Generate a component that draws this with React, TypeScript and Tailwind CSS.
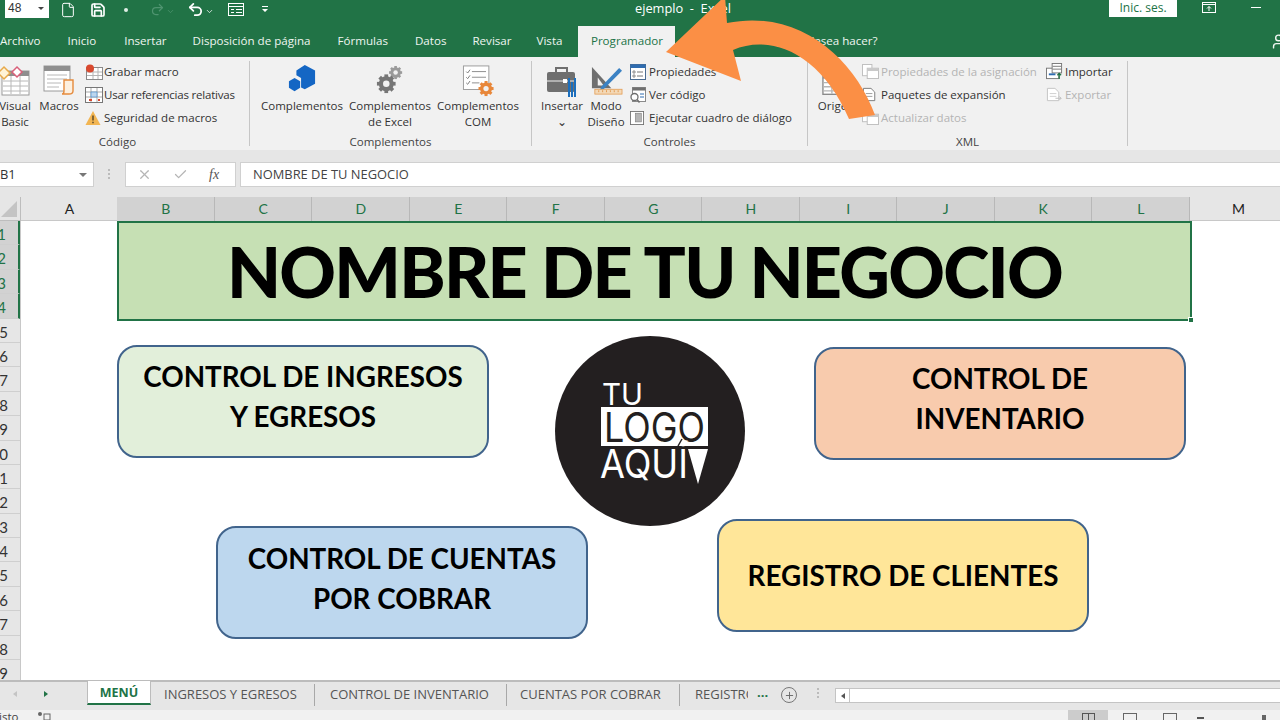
import React from 'react';
import { File, Save, Undo2, Redo2, Check, X, User, Plus, ChevronDown } from 'lucide-react';

const green = '#217346';

const tabs = [
  { label: 'Archivo', cls: 'ml-0' },
  { label: 'Inicio', cls: 'ml-[27px]' },
  { label: 'Insertar', cls: 'ml-[28px]' },
  { label: 'Disposición de página', cls: 'ml-[26px]' },
  { label: 'Fórmulas', cls: 'ml-[27px]' },
  { label: 'Datos', cls: 'ml-[27px]' },
  { label: 'Revisar', cls: 'ml-[26px]' },
  { label: 'Vista', cls: 'ml-[25px]' },
];

const columns = ['B', 'C', 'D', 'E', 'F', 'G', 'H', 'I', 'J', 'K', 'L'];
const rows = Array.from({ length: 19 }, (_, i) => i + 1);

// ribbon icons, all small drawings
const TableIcon = ({ className = '' }: { className?: string }) => (
  <svg viewBox="0 0 20 16" className={className}>
    <rect x="0.5" y="0.5" width="19" height="15" fill="#fff" stroke="#8a8a8a" />
    <rect x="0.5" y="0.5" width="19" height="3.5" fill="#8a8a8a" />
    <path d="M1 7h18M1 10h18M1 13h18M7 4v11M13 4v11" stroke="#b5b5b5" fill="none" />
  </svg>
);

const VbIcon = () => (
  <svg viewBox="0 0 32 32" className="w-[32px] h-[32px]">
    <rect x="3" y="6" width="27" height="24" fill="#fff" stroke="#9a9a9a" />
    <rect x="3" y="6" width="27" height="5" fill="#8f8f8f" />
    <path d="M4 16h25M4 21h25M4 26h25M12 11v18M21 11v18" stroke="#b8b8b8" fill="none" />
    <path d="M-1 8l6-6 6 6-6 6z" fill="#fff3d6" stroke="#e7a94a" strokeWidth="1.5" />
    <path d="M13 7l5-5 5 5-5 5z" fill="#fff" stroke="#d9607a" strokeWidth="1.5" />
  </svg>
);

const MacrosIcon = () => (
  <svg viewBox="0 0 32 32" className="w-[32px] h-[32px]">
    <rect x="1" y="1" width="26" height="25" fill="#fff" stroke="#9a9a9a" />
    <rect x="1" y="1" width="26" height="5" fill="#8f8f8f" />
    <path d="M4 10h20M4 14h20M4 18h14M4 22h12" stroke="#b8b8b8" fill="none" />
    <path d="M21 15h9v11c0 2-2 3-4 3h-7c2 0 2-2 2-3z" fill="#fdf0e0" stroke="#e58a3c" strokeWidth="1.4" />
  </svg>
);

const RecordIcon = () => (
  <svg viewBox="0 0 18 16" className="w-[18px] h-[16px]">
    <rect x="1.5" y="3.5" width="16" height="12" fill="#fff" stroke="#8a8a8a" />
    <path d="M2 8h15M2 11.500h15M8 4v11M13 4v11" stroke="#b5b5b5" fill="none" />
    <circle cx="5" cy="4.500" r="4" fill="#d9492f" />
  </svg>
);

const RelativeIcon = () => (
  <svg viewBox="0 0 18 16" className="w-[18px] h-[16px]">
    <rect x="0.5" y="0.5" width="17" height="15" fill="#fff" stroke="#777" />
    <path d="M1 5h16M1 10h16M6 1v14M12 1v14" stroke="#a9a9a9" fill="none" />
    <rect x="6" y="5" width="6" height="5" fill="#bcd6ee" stroke="#3d87c9" strokeWidth="0.6" />
    <path d="M4 13h3M13 13h2" stroke="#d9492f" strokeWidth="2" />
  </svg>
);

const WarningIcon = () => (
  <svg viewBox="0 0 16 16" className="w-[16px] h-[16px]">
    <path d="M8 1l7.500 14H.5z" fill="#f2b552" />
    <path d="M8 5.500v5M8 11.800v1.500" stroke="#5b4a2d" strokeWidth="1.500" />
  </svg>
);

const HexIcon = () => (
  <svg viewBox="0 0 30 30" className="w-[28px] h-[28px]">
    <path d="M18 0l11 6v14l-11 6-4-2V14l-5-3V6z" fill="#1466c4" />
    <path d="M7 14l6 3.500v7L7 28l-6-3.500v-7z" fill="#1466c4" />
  </svg>
);

const GearShape = ({ cx, cy, r, fill }: { cx: number; cy: number; r: number; fill: string }) => (
  <g>
    <circle cx={cx} cy={cy} r={r * 0.55} fill="none" stroke={fill} strokeWidth={r * 0.5} />
    {[0, 45, 90, 135].map((a) => (
      <rect
        key={a}
        x={cx - r * 0.2}
        y={cy - r}
        width={r * 0.4}
        height={r * 2}
        fill={fill}
        transform={`rotate(${a} ${cx} ${cy})`}
      />
    ))}
    <circle cx={cx} cy={cy} r={r * 0.35} fill="#f1f1f1" />
  </g>
);

const GearsIcon = () => (
  <svg viewBox="0 0 30 32" className="w-[28px] h-[30px]">
    <GearShape cx={21} cy={8} r={7} fill="#9a9a9a" />
    <GearShape cx={11} cy={20} r={10} fill="#767676" />
  </svg>
);

const ComIcon = () => (
  <svg viewBox="0 0 34 34" className="w-[33px] h-[32px]">
    <rect x="1" y="1" width="27" height="25" fill="#fff" stroke="#9a9a9a" />
    <path d="M10 7h15M10 13h15M10 19h8" stroke="#8a8a8a" fill="none" />
    <path d="M4 7l1.500 1.500L8 5M4 13l1.500 1.500L8 11M4 19l1.500 1.500L8 17" stroke="#777" fill="none" />
    <GearShape cx={25} cy={25} r={8} fill="#e8873a" />
  </svg>
);

const ToolboxIcon = () => (
  <svg viewBox="0 0 32 32" className="w-[32px] h-[32px]">
    <path d="M10 7V3h11v4" fill="none" stroke="#6f6f6f" strokeWidth="2" />
    <rect x="1" y="7" width="28" height="20" rx="2" fill="#6f6f6f" />
    <path d="M1 16h28" stroke="#f1f1f1" strokeWidth="1" />
    <rect x="17" y="14" width="4" height="4" fill="#fff" />
    <path d="M23 13v19M29 13v19M26 17v15" stroke="#1c6fbd" strokeWidth="2" fill="none" />
  </svg>
);

const DesignIcon = () => (
  <svg viewBox="0 0 34 34" className="w-[33px] h-[33px]">
    <path d="M2 2l20 22H2z" fill="#6f6f6f" />
    <path d="M8 13l6 8H8z" fill="#f1f1f1" />
    <path d="M12 22L30 3l3 3-19 19-4 1z" fill="#3b82c4" />
    <rect x="5" y="25" width="28" height="5" fill="#f3d9b8" stroke="#e39a4f" strokeWidth="0.8" />
    <path d="M9 26v2M13 26v2M17 26v2M21 26v2M25 26v2M29 26v2" stroke="#e39a4f" />
  </svg>
);

const PropsIcon = () => (
  <svg viewBox="0 0 16 16" className="w-[16px] h-[16px]">
    <rect x="0.5" y="0.5" width="15" height="15" fill="#fff" stroke="#4a6c92" />
    <rect x="0.5" y="0.5" width="15" height="3.500" fill="#2f6cb0" />
    <path d="M3 7h2v2H3zM3 11h2v2H3z" fill="none" stroke="#777" strokeWidth="0.8" />
    <path d="M7 8h6M7 12h6" stroke="#777" />
  </svg>
);

const ViewCodeIcon = () => (
  <svg viewBox="0 0 16 16" className="w-[16px] h-[16px]">
    <rect x="2.500" y="0.500" width="13" height="14" fill="#fff" stroke="#8a8a8a" />
    <rect x="2.500" y="0.500" width="13" height="3" fill="#6f6f6f" />
    <path d="M10 7h4M10 10h4" stroke="#2f6cb0" />
    <circle cx="4.500" cy="10" r="3.500" fill="#fff" stroke="#6f6f6f" strokeWidth="1.300" />
    <path d="M7 12.500l2.500 3" stroke="#6f6f6f" strokeWidth="1.500" />
  </svg>
);

const DialogIcon = () => (
  <svg viewBox="0 0 16 16" className="w-[14px] h-[16px]">
    <rect x="0.500" y="0.500" width="15" height="15" fill="#fff" stroke="#6f6f6f" />
    <rect x="6" y="2.500" width="7" height="10" fill="#b5b5b5" stroke="#777" strokeWidth="0.6" />
  </svg>
);

const DimTableIcon = () => (
  <svg viewBox="0 0 18 16" className="w-[17px] h-[15px]">
    <rect x="0.500" y="0.500" width="10" height="12" fill="#fff" stroke="#bdbdbd" />
    <rect x="5.500" y="4.500" width="12" height="11" fill="#fff" stroke="#bdbdbd" />
    <rect x="5.500" y="4.500" width="12" height="3" fill="#c9c9c9" />
  </svg>
);

const DocIcon = ({ dim, extra }: { dim?: boolean; extra?: string }) => (
  <svg viewBox="0 0 18 18" className="w-[17px] h-[17px]">
    <path d="M1.500 2.500h8l4 4v9h-12z" fill="#fff" stroke={dim ? '#c2c2c2' : '#777'} />
    <path d="M4 8h7M4 11h7" stroke={dim ? '#cfcfcf' : '#9a9a9a'} />
    {extra && <path d="M10 13h6l-2-2M16 13l-2 2" stroke={extra} fill="none" />}
  </svg>
);

const ImportIcon = () => (
  <svg viewBox="0 0 18 18" className="w-[17px] h-[17px]">
    <rect x="0.500" y="5.500" width="13" height="11" fill="#fff" stroke="#777" />
    <rect x="6.500" y="0.500" width="10" height="10" fill="#fff" stroke="#777" />
    <path d="M7 3.500h9M7 6.500h9" stroke="#777" />
    <path d="M3 12h7" stroke="#2f6cb0" strokeWidth="2" />
    <path d="M14 17v-6M12 13l2-2 2 2" stroke={green} strokeWidth="1.300" fill="none" />
  </svg>
);

const BigItem = ({ icon, lines, cls }: { icon: React.ReactNode; lines: string[]; cls: string }) => (
  <div className={`flex flex-col items-center shrink-0 ${cls}`}>
    <div className="h-[37px] shrink-0 pt-[4px] flex items-start justify-center">{icon}</div>
    {lines.map((l) => (
      <div key={l} className="h-[16px] shrink-0 leading-[16px] whitespace-nowrap">
        {l}
      </div>
    ))}
  </div>
);

const ListRow = ({ icon, label, dim }: { icon: React.ReactNode; label: React.ReactNode; dim?: boolean }) => (
  <div className={`h-[23px] flex items-center whitespace-nowrap ${dim ? 'text-[#b4b4b4]' : ''}`}>
    <div className="w-[19px] shrink-0 flex items-center">{icon}</div>
    {label}
  </div>
);

const Group = ({ label, cls, labelCls = '', children }: { label: string; cls: string; labelCls?: string; children: React.ReactNode }) => (
  <div className={`shrink-0 h-[85px] mt-[4px] border-r border-[#c6c6c6] ${cls}`}>
    <div className="flex h-[73px]">{children}</div>
    <div className={`h-[16px] leading-[16px] text-center text-[#444] ${labelCls}`}>{label}</div>
  </div>
);

const RoundedBox = ({ cls, lines }: { cls: string; lines: string[] }) => (
  <div
    className={`absolute w-[372px] h-[113px] rounded-[20px] border-2 border-[#41648c] flex flex-col text-[27.800px] leading-[40px] font-bold text-black text-center ${cls}`}
  >
    {lines.map((l) => (
      <div key={l} className="whitespace-nowrap">
        {l}
      </div>
    ))}
  </div>
);

export default function App() {
  return (
    <div className="relative w-[1280px] h-[720px] overflow-hidden bg-white flex flex-col font-['Open_Sans',sans-serif]">
      {/* title bar */}
      <div className="h-[26px] shrink-0 flex items-start text-white relative" style={{ background: green }}>
        <div className="ml-[5px] w-[44px] h-[18px] bg-white text-[#333] text-[12px] leading-[16px] pl-[3px] flex items-start justify-between pr-[5px] font-['Liberation_Sans',sans-serif]">
          48
          <span className="mt-[7px] w-0 h-0 border-x-[3px] border-x-transparent border-t-[3px] border-t-[#444]" />
        </div>
        <File size={16} strokeWidth={1.500} className="ml-[11px] mt-[2px]" />
        <Save size={16} strokeWidth={2.500} className="ml-[14px] mt-[2px]" />
        <span className="ml-[18px] mt-[8px] w-[4px] h-[4px] rounded-full bg-[#dfeee5]" />
        <Redo2 size={15} strokeWidth={2} className="ml-[22px] mt-[2px] text-[#4f9470]" />
        <ChevronDown size={9} className="ml-[1px] mt-[7px] text-[#4f9470]" />
        <Undo2 size={17} strokeWidth={2.500} className="ml-[12px] mt-[1px]" />
        <ChevronDown size={9} className="ml-[1px] mt-[7px]" />
        <svg viewBox="0 0 16 14" className="ml-[14px] mt-[3px] w-[16px] h-[14px]" fill="none" stroke="#fff">
          <rect x="0.500" y="0.500" width="15" height="12" />
          <path d="M1 3.500h14M3 6.500h3M3 9.500h3M8 6.500h6M8 9.500h6" />
        </svg>
        <svg viewBox="0 0 8 8" className="ml-[17px] mt-[5px] w-[8px] h-[8px]" fill="#fff">
          <path d="M1 1h6v1H1zM1 4h6L4 7z" />
        </svg>
        <div className="absolute left-[635px] top-[0px] text-[12.800px] leading-[16px] whitespace-pre">ejemplo  -  Excel</div>
        <div className="absolute left-[1109px] top-0 w-[68px] h-[17px] bg-white text-[#217346] text-[12px] leading-[16px] text-center">
          Inic. ses.
        </div>
        <svg viewBox="0 0 14 12" className="absolute left-[1202px] top-[2px] w-[14px] h-[12px]" fill="none" stroke="#fff">
          <rect x="0.500" y="0.500" width="13" height="10" />
          <path d="M1 2.500h12M7 9V4.500M5 6.500l2-2 2 2" />
        </svg>
        <div className="absolute left-[1251px] top-[7px] w-[10px] h-px bg-white" />
      </div>

      {/* tabs */}
      <div className="h-[31px] shrink-0 flex items-stretch text-[11.600px] text-[#eef5f0] relative" style={{ background: green }}>
        {tabs.map((t) => (
          <div key={t.label} className={`pt-[7px] leading-[16px] whitespace-nowrap ${t.cls}`}>
            {t.label}
          </div>
        ))}
        <div className="ml-[16px] w-[97px] bg-[#f1f1f1] text-center pt-[7px] leading-[16px] font-medium text-[#217346]">Programador</div>
        <div className="ml-[101px] pt-[7px] leading-[16px] whitespace-nowrap">¿Qué desea hacer?</div>
        <User size={17} className="absolute left-[1270px] top-[7px]" />
      </div>

      {/* ribbon */}
      <div className="h-[93px] shrink-0 bg-[#f1f1f1] flex items-start text-[11.500px] text-[#333]">
        <Group label="Código" cls="w-[250px]" labelCls="pr-[14px]">
          <div className="relative w-[36px] shrink-0">
            <BigItem icon={<VbIcon />} lines={['Visual', 'Basic']} cls="absolute left-[-3px] w-[36px]" />
          </div>
          <BigItem icon={<MacrosIcon />} lines={['Macros']} cls="w-[46px]" />
          <div className="ml-[3px] -mt-[1px]">
            <ListRow icon={<RecordIcon />} label="Grabar macro" />
            <ListRow icon={<RelativeIcon />} label={<span className="tracking-[-0.200px]">Usar referencias relativas</span>} />
            <ListRow icon={<WarningIcon />} label="Seguridad de macros" />
          </div>
        </Group>
        <Group label="Complementos" cls="w-[282px]">
          <BigItem icon={<HexIcon />} lines={['Complementos']} cls="ml-[8px] w-[88px]" />
          <BigItem icon={<GearsIcon />} lines={['Complementos', 'de Excel']} cls="w-[88px]" />
          <BigItem icon={<ComIcon />} lines={['Complementos', 'COM']} cls="w-[88px]" />
        </Group>
        <Group label="Controles" cls="w-[276px]">
          <BigItem icon={<ToolboxIcon />} lines={['Insertar', '⌄']} cls="ml-[9px] w-[42px]" />
          <BigItem icon={<DesignIcon />} lines={['Modo', 'Diseño']} cls="w-[46px]" />
          <div className="ml-[1px] -mt-[1px]">
            <ListRow icon={<PropsIcon />} label="Propiedades" />
            <ListRow icon={<ViewCodeIcon />} label="Ver código" />
            <ListRow icon={<DialogIcon />} label="Ejecutar cuadro de diálogo" />
          </div>
        </Group>
        <Group label="XML" cls="w-[320px]">
          <BigItem icon={<TableIcon className="w-[28px] h-[22px] mt-[8px]" />} lines={['Origen']} cls="ml-[9px] w-[38px]" />
          <div className="ml-[7px] -mt-[1px]">
            <ListRow icon={<DimTableIcon />} label="Propiedades de la asignación" dim />
            <ListRow icon={<DocIcon />} label="Paquetes de expansión" />
            <ListRow icon={<DimTableIcon />} label="Actualizar datos" dim />
          </div>
          <div className="ml-[9px] -mt-[1px]">
            <ListRow icon={<ImportIcon />} label="Importar" />
            <ListRow icon={<DocIcon dim extra="#bdbdbd" />} label="Exportar" dim />
          </div>
        </Group>
      </div>

      {/* formula bar */}
      <div className="h-[47px] shrink-0 bg-[#e6e6e6] pt-[12px] flex items-start text-[12.900px] text-[#444]">
        <div className="w-[94px] h-[25px] bg-white border border-[#d0d0d0] border-l-0 flex items-center justify-between pr-[6px] text-[#333] leading-none">
          <span>B1</span>
          <span className="w-0 h-0 border-x-[4px] border-x-transparent border-t-[4px] border-t-[#777]" />
        </div>
        <div className="ml-[14px] mt-[7px] flex flex-col gap-[2px]">
          <span className="w-[2px] h-[2px] bg-[#bbb]" />
          <span className="w-[2px] h-[2px] bg-[#bbb]" />
          <span className="w-[2px] h-[2px] bg-[#bbb]" />
        </div>
        <div className="ml-[15px] w-[111px] h-[25px] bg-white border border-[#d0d0d0] flex items-center text-[#b5b5b5]">
          <X size={15} className="ml-[11px]" />
          <Check size={15} className="ml-[21px]" />
          <span className="ml-[21px] text-[#555] italic font-['Liberation_Serif',serif] text-[14px]">fx</span>
        </div>
        <div className="ml-[4px] flex-1 h-[25px] bg-white border border-[#d0d0d0] border-r-0 flex items-center pl-[12px]">NOMBRE DE TU NEGOCIO</div>
      </div>

      {/* column headers */}
      <div className="h-[24px] shrink-0 bg-[#e6e6e6] flex text-[14px] leading-[24px] font-['Lato',sans-serif]">
        <div className="w-[21px] shrink-0 border-r border-b border-[#bdbdbd] relative">
          <div className="absolute right-[3px] bottom-[3px] w-0 h-0 border-l-[16px] border-l-transparent border-b-[16px] border-b-[#c4c4c4]" />
        </div>
        <div className="w-[96px] shrink-0 pl-[1px] text-center text-[#222] border-b border-[#c8c8c8]">A</div>
        {columns.map((c) => (
          <div key={c} className="w-[97.500px] shrink-0 pl-[1px] bg-[#d2d2d2] text-center text-[#217346] border-r border-[#b8b8b8]">
            {c}
          </div>
        ))}
        <div className="w-[98px] shrink-0 text-center text-[#222] border-b border-[#c8c8c8]">M</div>
      </div>

      {/* sheet */}
      <div className="flex-1 min-h-0 flex">
        <div className="w-[21px] shrink-0 bg-[#e6e6e6] overflow-hidden border-r border-[#c8c8c8] text-[15px] font-['Lato',sans-serif]">
          {rows.map((r) => (
            <div
              key={r}
              className={`h-[24.400px] leading-[26px] flex justify-end pr-[12px] border-b border-[#cfcfcf] ${
                r <= 4 ? 'bg-[#d2d2d2] text-[#217346] border-r-2 border-r-[#217346] pr-[10px]' : 'text-[#333]'
              }`}
            >
              {r}
            </div>
          ))}
        </div>
        <div className="relative flex-1 overflow-hidden">
          <div className="ml-[96px] w-[1075px] h-[100px] pr-[20px] bg-[#c6e0b4] border-2 border-[#217346] relative flex items-center justify-center text-[70px] tracking-[-1.750px] font-black text-black font-['Lato',sans-serif] whitespace-nowrap">
            NOMBRE DE TU NEGOCIO
            <span className="absolute right-[-4px] bottom-[-4px] w-[6px] h-[6px] bg-[#217346] border border-white" />
          </div>
          <div className="font-['Lato',sans-serif]">
            <RoundedBox cls="left-[96px] top-[124px] bg-[#e2efda] pt-[10px]" lines={['CONTROL DE INGRESOS', 'Y EGRESOS']} />
            <RoundedBox cls="left-[793px] top-[126px] bg-[#f8cbad] pt-[10px]" lines={['CONTROL DE', 'INVENTARIO']} />
            <RoundedBox cls="left-[195px] top-[305px] bg-[#bdd7ee] pt-[11px]" lines={['CONTROL DE CUENTAS', 'POR COBRAR']} />
            <RoundedBox cls="left-[696px] top-[298px] bg-[#ffe699] justify-center" lines={['REGISTRO DE CLIENTES']} />
          </div>
          {/* logo */}
          <svg viewBox="0 0 190 190" className="absolute left-[534px] top-[115px] w-[190px] h-[190px]">
            <circle cx="95" cy="95" r="95" fill="#231f20" />
            <text x="47" y="69" textLength="41" lengthAdjust="spacingAndGlyphs" fontFamily="Inter" fontWeight="400" fontSize="30" fill="#fff">TU</text>
            <rect x="46" y="71" width="107" height="39" fill="#fff" />
            <text x="49" y="106" textLength="101" lengthAdjust="spacingAndGlyphs" fontFamily="Inter" fontWeight="400" fontSize="41" fill="#231f20">LOGO</text>
            <path d="M123 110l4-7" stroke="#231f20" strokeWidth="1.500" />
            <text x="45" y="142" textLength="88" lengthAdjust="spacingAndGlyphs" fontFamily="Inter" fontWeight="400" fontSize="40" fill="#fff">AQUÍ</text>
            <path d="M133 113h20l-10 35z" fill="#fff" />
          </svg>
        </div>
      </div>

      {/* sheet tabs */}
      <div className="h-[30px] shrink-0 bg-[#e6e6e6] border-t-[2px] border-[#bcbcbc] flex items-start text-[13px] text-[#555] leading-[24px]">
        <span className="ml-[13px] mt-[9px] w-0 h-0 border-y-[3.500px] border-y-transparent border-r-[4px] border-r-[#c4c4c4]" />
        <span className="ml-[27px] mt-[9px] w-0 h-0 border-y-[3.500px] border-y-transparent border-l-[4px] border-l-[#217346]" />
        <div className="ml-[39px] w-[64px] h-[24px] bg-white border-x border-[#bcbcbc] border-b-2 border-b-[#217346] text-center text-[12.500px] font-bold text-[#217346] -mt-[1px]">
          MENÚ
        </div>
        <div className="w-[164px] h-[22px] mt-[2px] leading-[21px] pl-[13px] border-r border-[#a8a8a8] whitespace-nowrap">INGRESOS Y EGRESOS</div>
        <div className="w-[192px] h-[22px] mt-[2px] leading-[21px] pl-[15px] border-r border-[#a8a8a8] whitespace-nowrap">CONTROL DE INVENTARIO</div>
        <div className="w-[173px] h-[22px] mt-[2px] leading-[21px] pl-[13px] border-r border-[#a8a8a8] whitespace-nowrap">CUENTAS POR COBRAR</div>
        <div className="w-[68px] h-[22px] mt-[2px] leading-[21px] pl-[15px] overflow-hidden whitespace-nowrap">REGISTRO</div>
        <span className="ml-[9px] font-bold text-[#217346] leading-[20px]">...</span>
        <div className="ml-[13px] mt-[5px] w-[16px] h-[16px] rounded-full border border-[#777] flex items-center justify-center text-[#666]">
          <Plus size={11} />
        </div>
        <div className="ml-[20px] mt-[6px] flex flex-col gap-[2px]">
          <span className="w-[2px] h-[2px] bg-[#bbb]" />
          <span className="w-[2px] h-[2px] bg-[#bbb]" />
          <span className="w-[2px] h-[2px] bg-[#bbb]" />
        </div>
        <div className="ml-[16px] mt-[6px] flex-1 h-[15px] bg-white border border-[#c4c4c4] border-r-0 flex">
          <div className="w-[14px] border-r border-[#c4c4c4] flex items-center justify-center">
            <span className="w-0 h-0 border-y-[3px] border-y-transparent border-r-[4px] border-r-[#555]" />
          </div>
        </div>
      </div>

      {/* status bar */}
      <div className="h-[10px] shrink-0 bg-[#f1f1f1] relative flex items-start text-[11.500px] text-[#444] overflow-hidden">
        <div className="absolute left-[-7px] top-[0px] leading-[14px]">Listo</div>
        <svg viewBox="0 0 14 10" className="absolute left-[37px] top-[2px] w-[14px] h-[10px]">
          <circle cx="3" cy="2" r="2" fill="#666" />
          <rect x="7" y="2" width="6" height="6" fill="none" stroke="#666" />
        </svg>
        <div className="ml-[1068px] w-[40px] h-full bg-[#cccccc] flex justify-center pt-[3px]">
          <div className="w-[13px] h-[7px] border border-[#555] border-b-0 bg-[linear-gradient(#555,#555)] bg-[length:1px_100%] bg-center bg-no-repeat" />
        </div>
        <div className="ml-[15px] mt-[3px] w-[14px] h-[7px] border border-[#666] border-b-0" />
        <div className="ml-[26px] mt-[3px] w-[14px] h-[7px] border border-[#666] border-b-0" />
        <div className="ml-[20px] mt-[7px] w-[7px] h-[2px] bg-[#555]" />
        <div className="ml-[58px] mt-[5px] w-[4px] h-[5px] bg-[#666]" />
      </div>

      {/* orange arrow on top of everything */}
      <svg viewBox="0 0 1280 720" className="absolute inset-0 w-[1280px] h-[720px] pointer-events-none">
        <path d="M725 -4 L666 52 L741 81 L733 50 C770 34 820 52 849 119 L875 115 C855 60 800 8 727 23 Z" fill="#fb8f45" />
      </svg>
    </div>
  );
}
